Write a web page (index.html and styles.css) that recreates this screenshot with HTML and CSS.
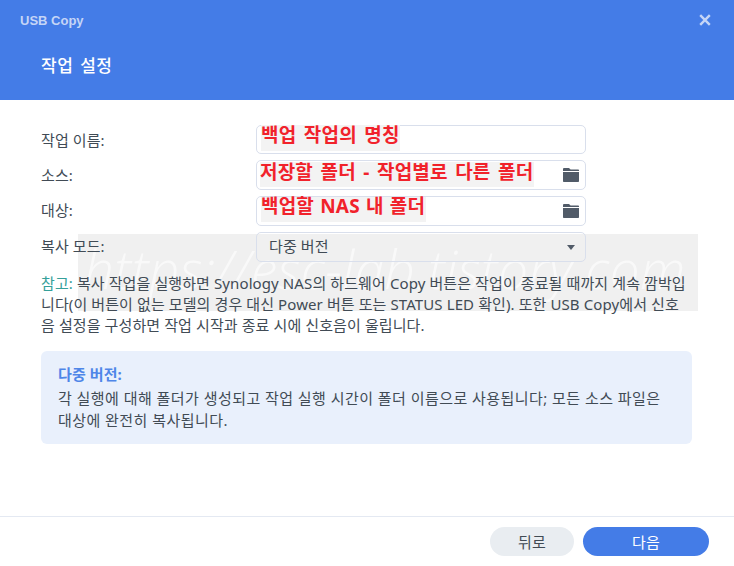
FILE: index.html
```html
<!DOCTYPE html>
<html lang="ko">
<head>
<meta charset="utf-8">
<title>USB Copy</title>
<link rel="stylesheet" href="styles.css">
</head>
<body>
<div class="dialog">
  <header class="head">
    <div class="head-top">
      <span class="app">USB Copy</span>
      <svg class="close" width="12" height="12" viewBox="0 0 12 12"><path d="M1.2 1.2 10.8 10.8M10.8 1.2 1.2 10.8" stroke="#c5d5f6" stroke-width="2.4" fill="none"/></svg>
    </div>
    <h1 class="title">작업 설정</h1>
  </header>
  <div class="mark"><span>https://esc-lab.tistory.com</span></div>
  <main class="body">
    <div class="form">
      <div class="row">
        <label class="lab">작업 이름:</label>
        <div class="field first"><span class="note note-a">백업 작업의 명칭</span></div>
      </div>
      <div class="row">
        <label class="lab">소스:</label>
        <div class="field"><span class="note note-b">저장할 폴더 - 작업별로 다른 폴더</span>
          <svg class="folder" width="16" height="14" viewBox="0 0 16 14"><path d="M0 1.2C0 .5.5 0 1.2 0H6l1.6 1.6H15c.6 0 1 .4 1 1V3H0ZM0 4h16v9c0 .6-.4 1-1 1H1c-.6 0-1-.4-1-1Z" fill="#515b68"/></svg>
        </div>
      </div>
      <div class="row">
        <label class="lab up">대상:</label>
        <div class="field"><span class="note note-c">백업할 NAS 내 폴더</span>
          <svg class="folder" width="16" height="14" viewBox="0 0 16 14"><path d="M0 1.2C0 .5.5 0 1.2 0H6l1.6 1.6H15c.6 0 1 .4 1 1V3H0ZM0 4h16v9c0 .6-.4 1-1 1H1c-.6 0-1-.4-1-1Z" fill="#515b68"/></svg>
        </div>
      </div>
      <div class="row">
        <label class="lab up">복사 모드:</label>
        <div class="field select"><span class="sel-text">다중 버전</span><i class="caret"></i></div>
      </div>
    </div>
    <p class="hint"><span class="teal">참고:</span> 복사 작업을 실행하면 Synology NAS의 하드웨어 Copy 버튼은 작업이 종료될 때까지 계속 깜박입<br>니다(이 버튼이 없는 모델의 경우 대신 Power 버튼 또는 STATUS LED 확인). 또한 USB Copy에서 신호<br>음 설정을 구성하면 작업 시작과 종료 시에 신호음이 울립니다.</p>
    <section class="info">
      <div class="info-title">다중 버전:</div>
      <p class="info-text">각 실행에 대해 폴더가 생성되고 작업 실행 시간이 폴더 이름으로 사용됩니다; 모든 소스 파일은<br>대상에 완전히 복사됩니다.</p>
    </section>
  </main>
  <footer class="foot">
    <button class="btn back">뒤로</button>
    <button class="btn next">다음</button>
  </footer>
</div>
</body>
</html>
```

FILE: styles.css
```css
* { box-sizing: border-box; }
html, body { margin: 0; padding: 0; }
body { width: 734px; height: 566px; overflow: hidden; background: #fff; font-family: "Noto Sans", "Noto Sans CJK KR", sans-serif; font-size: 15px; letter-spacing: .1px; color: #414b55; }
.dialog { position: relative; width: 734px; height: 566px; display: flex; flex-direction: column; }
.head { height: 100px; background: #447ce7; padding: 0 23px 0 20px; flex: none; }
.head-top { display: flex; justify-content: space-between; align-items: center; height: 40px; }
.app { font-family: "Liberation Sans", sans-serif; font-weight: 700; font-size: 13px; letter-spacing: 0; color: #c5d5f6; }
.title { margin: 14px 0 0 21px; font-size: 17px; line-height: 24px; font-weight: 500; letter-spacing: .5px; word-spacing: 2px; color: #fff; }
.body { position: relative; flex: 1; padding: 25px 42px 0 41px; }
.form { display: flex; flex-direction: column; gap: 6px; }
.row { display: flex; align-items: center; }
.lab { width: 215px; flex: none; line-height: 20px; }
.up { padding-bottom: 2px; }
.field { position: relative; width: 330px; height: 30px; border: 1px solid #d9dfec; border-radius: 5px; background: #fff; display: flex; align-items: center; justify-content: flex-end; padding: 0 6px 0 12px; }
.first { height: 29px; }
.select { justify-content: space-between; background: transparent; padding-right: 10px; }
.sel-text { padding-bottom: 3px; }
.caret { width: 0; height: 0; border: 5px solid transparent; border-width: 5px 4.5px 0; border-top-color: #515b68; }
.note { position: absolute; background: #f3f3f3; color: #f1222b; font-weight: 700; font-size: 19px; letter-spacing: .2px; word-spacing: 2.3px; line-height: 21px; white-space: nowrap; }
.note-a { left: 4px; top: -1px; width: 139px; height: 26px; }
.note-b { left: 3px; top: 1px; width: 274px; height: 25px; }
.note-c { left: 4px; top: 0; width: 165px; height: 25px; line-height: 18px; word-spacing: 1px; }
.hint { margin: 11px 0 0; line-height: 21px; white-space: nowrap; }
.teal { color: #35a09a; }
.info { margin-top: 15px; height: 93px; background: #e9f0fc; border-radius: 6px; padding: 11px 17px; }
.info-title { font-weight: 700; color: #4f86e8; line-height: 24px; }
.info-text { margin: 1px 0 0; line-height: 22px; letter-spacing: .45px; white-space: nowrap; }
.foot { height: 50px; border-top: 1px solid #e4e9f2; display: flex; justify-content: flex-end; gap: 9px; padding: 10px 25px 0 0; flex: none; }
.btn { height: 29px; border: 0; border-radius: 15px; font: inherit; letter-spacing: inherit; line-height: 20px; padding: 0; }
.back { width: 84px; background: #e9edf1; color: #414b55; }
.next { width: 126px; background: #447ce7; color: #fff; }
.mark { position: absolute; left: 78px; top: 234px; width: 620px; height: 77px; background: #f0f0f0; overflow: hidden; pointer-events: none; }
.mark span { position: absolute; left: 6px; top: 0; font-family: "Open Sans", sans-serif; font-style: italic; font-weight: 300; font-size: 53px; line-height: 70px; letter-spacing: .5px; color: rgba(255,255,255,.6); white-space: nowrap; }
```
